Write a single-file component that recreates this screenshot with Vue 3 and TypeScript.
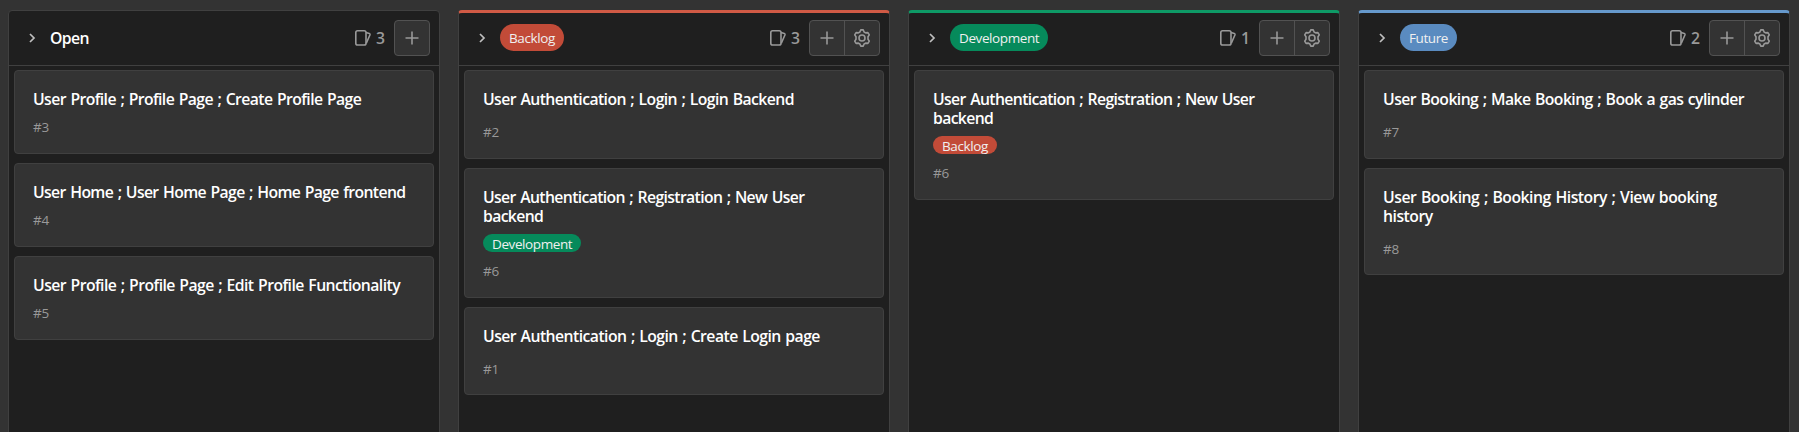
<script setup lang="ts">
interface Label { text: string; tone: string }
interface Card { id: number; title: string[]; height: number; tracking: number; label?: Label; roomy?: boolean }
interface Column { name: string; tone?: string; cards: Card[] }

const backlog: Label = { text: 'Backlog', tone: 'orange' }
const development: Label = { text: 'Development', tone: 'green' }

const columns: Column[] = [
  {
    name: 'Open',
    cards: [
      { id: 3, title: ['User Profile ; Profile Page ; Create Profile Page'], height: 84, tracking: -0.59 },
      { id: 4, title: ['User Home ; User Home Page ; Home Page frontend'], height: 84, tracking: -0.63 },
      { id: 5, title: ['User Profile ; Profile Page ; Edit Profile Functionality'], height: 84, tracking: -0.56 },
    ],
  },
  {
    name: 'Backlog',
    tone: 'orange',
    cards: [
      { id: 2, title: ['User Authentication ; Login ; Login Backend'], height: 89, tracking: -0.58, roomy: true },
      { id: 6, title: ['User Authentication ; Registration ; New User', 'backend'], height: 130, tracking: -0.63, label: development },
      { id: 1, title: ['User Authentication ; Login ; Create Login page'], height: 88, tracking: -0.55, roomy: true },
    ],
  },
  {
    name: 'Development',
    tone: 'green',
    cards: [
      { id: 6, title: ['User Authentication ; Registration ; New User', 'backend'], height: 130, tracking: -0.63, label: backlog },
    ],
  },
  {
    name: 'Future',
    tone: 'blue',
    cards: [
      { id: 7, title: ['User Booking ; Make Booking ; Book a gas cylinder'], height: 89, tracking: -0.57, roomy: true },
      { id: 8, title: ['User Booking ; Booking History ; View booking', 'history'], height: 107, tracking: -0.48, roomy: true },
    ],
  },
]
</script>

<template>
  <main class="board">
    <section v-for="col in columns" :key="col.name" class="column" :class="col.tone">
      <header class="head">
        <svg class="chevron" viewBox="0 0 18 18"><path d="M7 5l4 4-4 4" /></svg>
        <span v-if="col.tone" class="pill big" :class="col.tone">{{ col.name }}</span>
        <h2 v-else class="name">{{ col.name }}</h2>
        <svg class="issues" viewBox="0 0 18 18">
          <rect x="1.8" y="1.8" width="10.2" height="14.2" rx="1.8" />
          <path d="M12 3.4 15.3 4.4q1 .4.7 1.4L12.3 14.2" />
        </svg>
        <span class="count">{{ col.cards.length }}</span>
        <div class="actions">
          <button type="button" aria-label="Add"><svg viewBox="0 0 18 18"><path d="M9 2.5v13M2.5 9h13" /></svg></button>
          <button v-if="col.tone" type="button" aria-label="Settings">
            <svg viewBox="0 0 18 18">
              <circle cx="9" cy="9" r="3" />
              <path d="M7.8.9h2.4l.9 2.1 1.5.9 2.3-.3 1.4 2.3L15 7.8v2.4l1.3 1.9-1.4 2.3-2.3-.3-1.5.9-.9 2.1H7.8L6.9 15l-1.5-.9-2.3.3-1.4-2.3L3 10.2V7.8L1.7 5.9l1.4-2.3 2.3.3L6.9 3z" />
            </svg>
          </button>
        </div>
      </header>
      <div class="list">
        <article v-for="card in col.cards" :key="card.id" class="card" :style="{ height: card.height + 'px' }">
          <h3 class="title" :style="{ letterSpacing: card.tracking + 'px' }">
            <span v-for="line in card.title" :key="line">{{ line }}</span>
          </h3>
          <span v-if="card.label" class="pill" :class="card.label.tone">{{ card.label.text }}</span>
          <span class="id" :class="{ roomy: card.roomy }">#{{ card.id }}</span>
        </article>
      </div>
    </section>
  </main>
</template>

<style>
body { background: #333; overflow: hidden; }
</style>

<style scoped>
.board { box-sizing: border-box; height: 432px; padding: 10px 9px 0 8px; display: flex; gap: 18px; background: #333; font-family: "Segoe UI", "Open Sans", "Noto Sans", sans-serif; overflow: hidden; }
.column { box-sizing: border-box; width: 432px; height: 440px; flex: none; border: 1px solid #404040; border-radius: 4px 4px 0 0; background: #1f1f1f; }
.column.orange { border-top: 3px solid #d05a45; }
.column.green { border-top: 3px solid #0e9a66; }
.column.blue { border-top: 3px solid #6699cc; }
.head { box-sizing: border-box; height: 55px; padding: 0 9px 0 14px; display: flex; align-items: center; border-bottom: 1px solid #404040; }
.orange .head, .green .head, .blue .head { height: 53px; padding-bottom: 2px; }
.chevron { width: 18px; height: 18px; margin-right: 9px; fill: none; stroke: #bfbfbf; stroke-width: 1.7; }
.name { margin: 0; font-size: 15.75px; font-weight: 600; line-height: 20px; letter-spacing: -0.6px; color: #fff; }
.issues { width: 18px; height: 18px; margin-left: auto; fill: none; stroke: #999; stroke-width: 1.6; }
.count { margin: 0 9px 0 4px; font-size: 15.75px; font-weight: 600; line-height: 20px; letter-spacing: -0.1px; color: #999; }
.actions { display: flex; border: 1px solid #525252; border-radius: 4px; background: #333; overflow: hidden; }
.actions button { box-sizing: border-box; width: 34px; height: 34px; margin: 0; padding: 0; display: grid; place-items: center; border: 0; background: none; }
.actions button + button { width: 35px; border-left: 1px solid #525252; }
.actions svg { width: 18px; height: 18px; fill: none; stroke: #999; stroke-width: 1.6; stroke-linejoin: round; }
.pill { align-self: flex-start; flex: none; height: 18px; padding: 0 9px; border-radius: 9px; font-size: 13.5px; line-height: 20px; letter-spacing: -0.4px; color: #f0f0f0; white-space: nowrap; }
.pill.big { align-self: center; height: 27px; margin-bottom: 1px; border-radius: 14px; line-height: 29px; }
.pill.orange { background: #c24b38; }
.pill.green { background: #068a5b; }
.pill.blue { background: #5a8bc0; }
.list { padding: 4px 5px; display: flex; flex-direction: column; gap: 9px; }
.card { box-sizing: border-box; padding: 19px 18px 0; display: flex; flex-direction: column; border: 1px solid #404040; border-radius: 4px; background: #333; }
.title { margin: 0; font-size: 15.75px; font-weight: 600; line-height: 19px; word-spacing: 1px; color: #fff; white-space: nowrap; }
.title span { display: block; width: max-content; }
.card .pill { margin-top: 8px; }
.id { margin-top: 8px; font-size: 13.5px; line-height: 20px; letter-spacing: -0.3px; color: #999; }
.pill + .id { margin-top: 9px; }
.id.roomy { margin-top: 13px; }
</style>
